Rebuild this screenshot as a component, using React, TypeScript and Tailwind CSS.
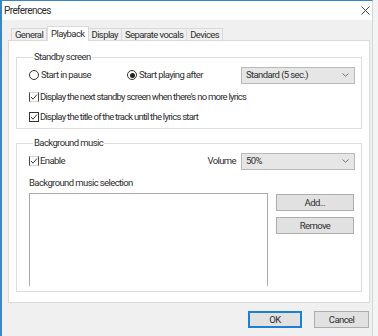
const font = { fontFamily: 'Roboto, "Noto Sans", sans-serif' }

function Radio({ checked }: { checked?: boolean }) {
  return (
    <span className="w-[10px] h-[10px] rounded-full border border-[#333] bg-white flex items-center justify-center shrink-0">
      {checked && <span className="w-[5px] h-[5px] rounded-full bg-[#222]" />}
    </span>
  )
}

function Check({ faint }: { faint?: boolean }) {
  return (
    <span
      className={`w-[10px] h-[10px] border bg-white shrink-0 flex items-center justify-center ${
        faint ? 'border-x-[#444] border-y-[#d6d6d6]' : 'border-[#333]'
      }`}
    >
      <svg width="8" height="8" viewBox="0 0 8 8">
        <path d="M1 4 L3 6.2 L7 1.5" fill="none" stroke="#222" strokeWidth="0.9" />
      </svg>
    </span>
  )
}

function Combo({ label }: { label: string }) {
  return (
    <div className="w-[114px] h-[17px] bg-[#e6e6e6] border border-[#b9b9b9] flex items-center justify-between pl-[4px] pr-[5px]">
      <span>{label}</span>
      <svg width="7" height="4" viewBox="0 0 7 4">
        <path d="M0.5 0.5 L3.5 3.3 L6.5 0.5" fill="none" stroke="#555" strokeWidth="0.8" />
      </svg>
    </div>
  )
}

function Btn({ children, primary, w }: { children: React.ReactNode; primary?: boolean; w: string }) {
  return (
    <div
      className={`${w} h-[17px] bg-[#e1e1e1] flex items-center justify-center ${
        primary ? 'border-2 border-[#1f7fd0]' : 'border border-[#adadad]'
      }`}
    >
      {children}
    </div>
  )
}

export default function App() {
  const tabs = ['General', 'Playback', 'Display', 'Separate vocals', 'Devices']
  return (
    <div className="w-[378px] h-[336px] bg-[#f4f4f4] overflow-hidden text-[9.5px] leading-[14px] tracking-[-0.6px] text-[#2e2e2e]" style={font}>
      <div className="w-[373px] h-full border-l-2 border-t border-r border-[#3b86c0] border-r-[#cfd8df] bg-[#f0f0f0] flex flex-col">
        {/* title bar */}
        <div className="h-[19px] bg-white flex items-center justify-between pl-[2px] pr-[2px]">
          <span className="text-[10px] tracking-[-0.6px]">Preferences</span>
          <svg width="9" height="9" viewBox="0 0 9 9">
            <path d="M0.5 0.5 L8.5 8.5 M8.5 0.5 L0.5 8.5" stroke="#333" strokeWidth="0.9" />
          </svg>
        </div>

        <div className="flex-1 flex flex-col pl-[6px] pr-[2px]">
          {/* tabs */}
          <div className="h-[20px] flex items-end pl-[3px]">
            {tabs.map((t) =>
              t === 'Playback' ? (
                <div key={t} className="h-[15px] -mb-px z-10 bg-white border border-b-0 border-[#d9d9d9] px-[3px] flex items-center">
                  {t}
                </div>
              ) : (
                <div key={t} className="h-[12px] border border-b-0 border-[#d9d9d9] -ml-px first:ml-0 px-[3px] flex items-center bg-[#f0f0f0]">
                  {t}
                </div>
              ),
            )}
          </div>

          {/* panel */}
          <div className="h-[263px] bg-white border border-[#d9d9d9] px-[7px] pt-[9px]">
            <fieldset className="border border-[#dcdcdc] pl-[12px] pr-[6px] pb-px">
              <legend className="ml-[4px] px-px">Standby screen</legend>
              <div className="mt-px h-[20px] flex items-center">
                <Radio />
                <span className="ml-[2px] w-[86px]">Start in pause</span>
                <Radio checked />
                <span className="ml-[2px]">Start playing after</span>
                <div className="ml-auto">
                  <Combo label="Standard (5 sec.)" />
                </div>
              </div>
              <div className="h-[20px] mt-[2px] flex items-center tracking-[-0.75px]">
                <Check faint />
                <span className="ml-px">Display the next standby screen when there's no more lyrics</span>
              </div>
              <div className="h-[20px] flex items-center tracking-[-0.75px]">
                <Check />
                <span className="ml-px">Display the title of the track until the lyrics start</span>
              </div>
            </fieldset>

            <fieldset className="mt-[7px] border border-[#dcdcdc] pl-[12px] pr-[6px] pb-[5px]">
              <legend className="ml-[4px] px-px">Background music</legend>
              <div className="mt-px h-[20px] flex items-center">
                <Check faint />
                <span className="ml-px">Enable</span>
                <span className="ml-auto mr-[5px]">Volume</span>
                <Combo label="50%" />
              </div>
              <div className="mt-[5px] h-[14px]">Background music selection</div>
              <div className="mt-[3px] flex gap-[8px]">
                <div className="w-[239px] h-[93px] border border-b-0 border-[#a9a9a9] bg-white" />
                <div className="pt-px flex flex-col gap-[6px]">
                  <Btn w="w-[78px]">Add...</Btn>
                  <Btn w="w-[78px]">Remove</Btn>
                </div>
              </div>
            </fieldset>
          </div>

          {/* footer */}
          <div className="pt-[8px] pr-px flex justify-end gap-[12px]">
            <Btn primary w="w-[54px]">OK</Btn>
            <Btn w="w-[55px]">Cancel</Btn>
          </div>
        </div>
      </div>
    </div>
  )
}
